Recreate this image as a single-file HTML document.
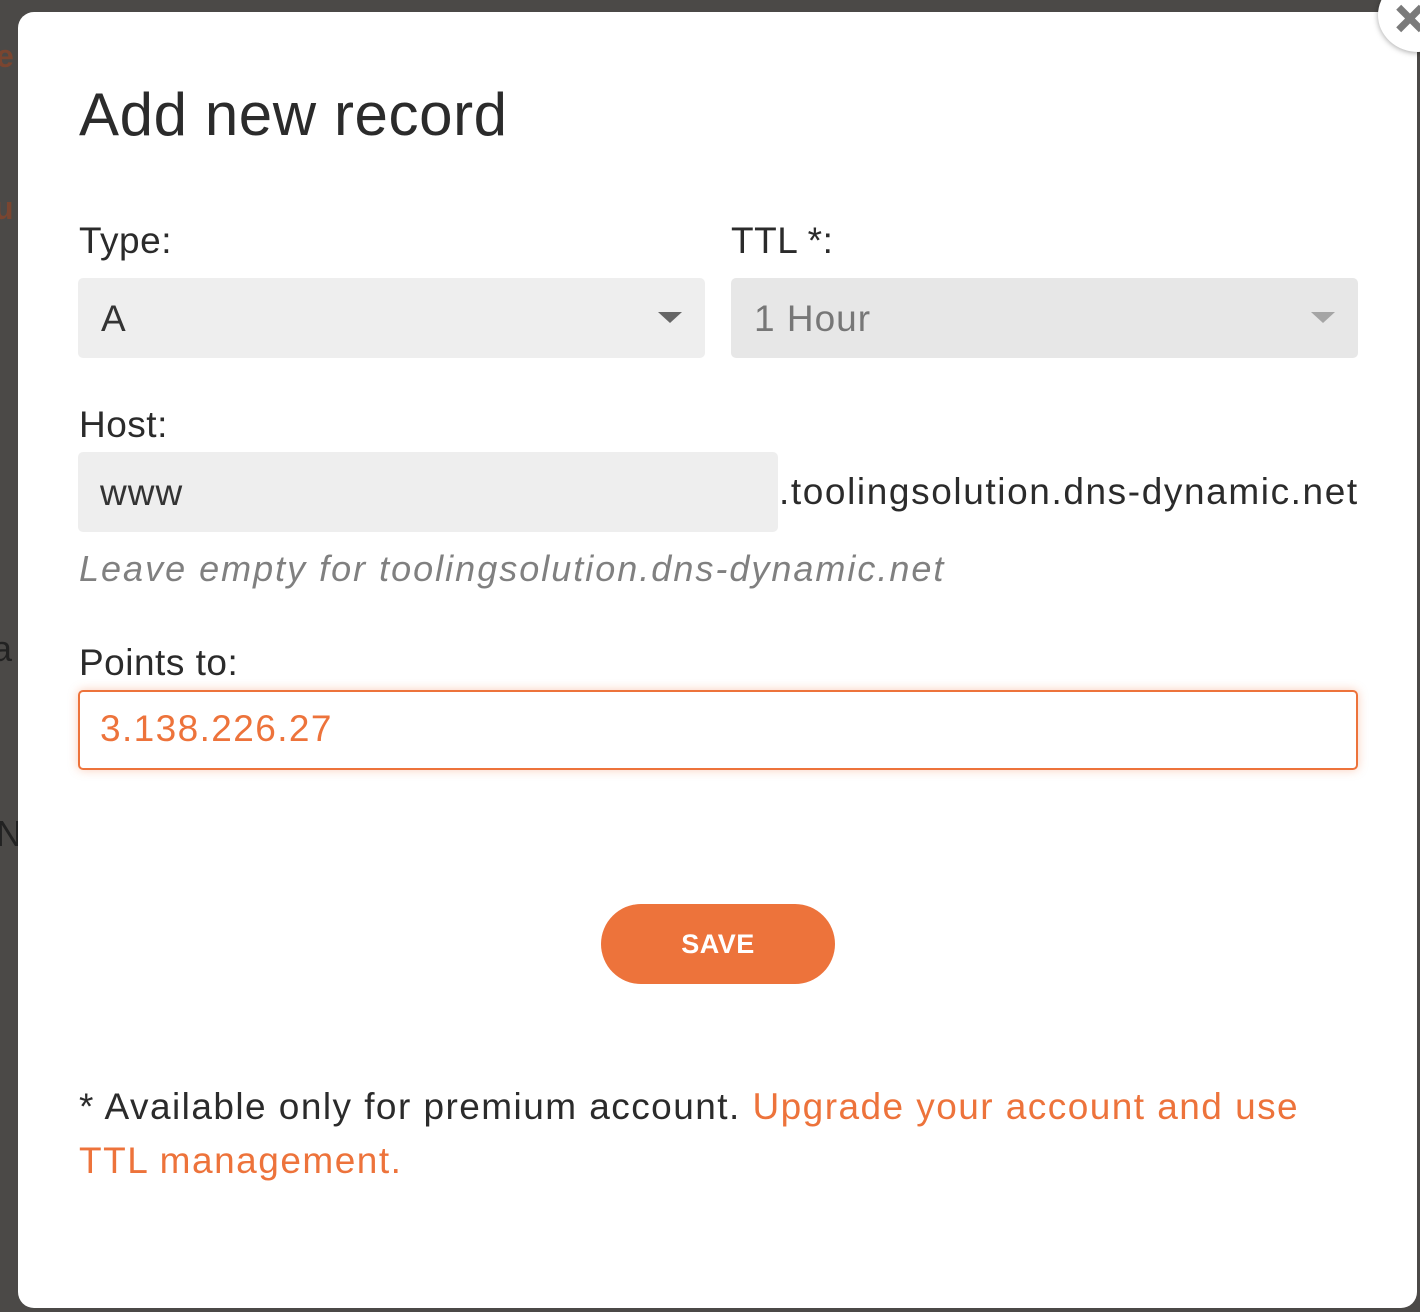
<!DOCTYPE html>
<html><head><meta charset="utf-8"><style>
html,body{margin:0;padding:0;width:1420px;height:1312px;overflow:hidden;background:#4b4947;font-family:"Liberation Sans",sans-serif;}
.modal{position:absolute;left:18px;top:12px;width:1399px;height:1296px;background:#fff;border-radius:16px;}
.a{position:absolute;white-space:nowrap;}
.lbl{font-size:37px;color:#2b2b2b;letter-spacing:0.5px;}
.box{position:absolute;background:#eeeeee;border-radius:5px;}
.tri{position:absolute;width:0;height:0;border-left:12px solid transparent;border-right:12px solid transparent;border-top:11px solid #666;}
.close{position:absolute;left:1378px;top:-22px;width:80px;height:74px;border-radius:50%;background:#fff;box-shadow:0 1px 6px rgba(0,0,0,.35);}
.x1,.x2{position:absolute;left:1394px;top:15px;width:32px;height:7px;background:#7a7a7a;}
.x1{transform:rotate(45deg)}.x2{transform:rotate(-45deg)}
</style></head><body>
<div class="a" style="left:-4px;top:38px;font-size:32px;color:#7a4530;font-weight:bold">e</div>
<div class="a" style="left:-6px;top:190px;font-size:32px;color:#7a4530;font-weight:bold">u</div>
<div class="a" style="left:-8px;top:628px;font-size:36px;color:#222">a</div>
<div class="a" style="left:-4px;top:813px;font-size:36px;color:#222">N</div>
<div class="modal"></div>
<div class="close"></div><div class="x1"></div><div class="x2"></div>

<div class="a" style="left:79px;top:80px;font-size:60px;color:#2b2b2b;letter-spacing:0.6px">Add new record</div>

<div class="a lbl" style="left:79px;top:220px">Type:</div>
<div class="a lbl" style="left:731px;top:220px">TTL *:</div>

<div class="box" style="left:78px;top:278px;width:627px;height:80px;"></div>
<div class="a" style="left:101px;top:298px;font-size:37px;color:#333">A</div>
<div class="tri" style="left:658px;top:312px;border-top-color:#666"></div>

<div class="box" style="left:731px;top:278px;width:627px;height:80px;background:#e7e7e7"></div>
<div class="a" style="left:754px;top:298px;font-size:37px;color:#777;letter-spacing:1px">1 Hour</div>
<div class="tri" style="left:1311px;top:312px;border-top-color:#a5a5a5"></div>

<div class="a lbl" style="left:79px;top:404px">Host:</div>
<div class="box" style="left:78px;top:452px;width:700px;height:80px;"></div>
<div class="a" style="left:100px;top:472px;font-size:37px;color:#333;letter-spacing:1px">www</div>
<div class="a" style="left:779px;top:471px;font-size:37px;color:#2b2b2b;letter-spacing:1.6px">.toolingsolution.dns-dynamic.net</div>
<div class="a" style="left:79px;top:548px;font-size:36px;color:#808080;font-style:italic;letter-spacing:2px">Leave empty for toolingsolution.dns-dynamic.net</div>

<div class="a lbl" style="left:79px;top:642px">Points to:</div>
<div style="position:absolute;left:78px;top:690px;width:1276px;height:76px;border:2px solid #ed733b;border-radius:5px;box-shadow:0 0 10px rgba(237,115,59,.35);"></div>
<div class="a" style="left:100px;top:708px;font-size:37px;color:#ed733b;letter-spacing:1.4px">3.138.226.27</div>

<div style="position:absolute;left:601px;top:904px;width:234px;height:80px;border-radius:40px;background:#ed733b;color:#fff;font-size:27px;font-weight:bold;text-align:center;line-height:80px;letter-spacing:0.5px">SAVE</div>

<div class="a" style="left:79px;top:1086px;font-size:37px;color:#2b2b2b;letter-spacing:1.45px">* Available only for premium account. <span style="color:#ed733b">Upgrade your account and use</span></div>
<div class="a" style="left:79px;top:1140px;font-size:37px;color:#ed733b;letter-spacing:1.5px">TTL management.</div>
</body></html>
